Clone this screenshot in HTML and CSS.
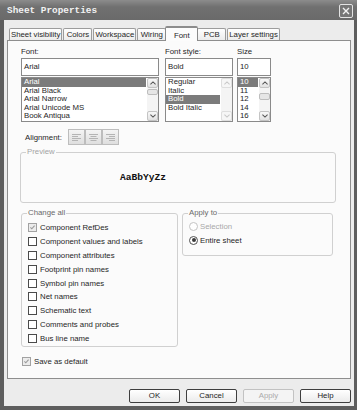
FILE: index.html
```html
<!DOCTYPE html>
<html lang="en">
<head>
  <meta charset="UTF-8">
  <title>Sheet Properties</title>
  <link rel="stylesheet" href="styles.css">
</head>
<body>
  <div class="window">
    <div class="titlebar">
      <span class="title">Sheet Properties</span>
      <span class="close">
        <svg width="8" height="8" viewBox="0 0 8 8"><path d="M1 1 L7 7 M7 1 L1 7" stroke="#f2f2f2" stroke-width="1.4"/></svg>
      </span>
    </div>

    <div class="client">
      <div class="tabs">
        <div class="tab">Sheet visibility</div>
        <div class="tab">Colors</div>
        <div class="tab">Workspace</div>
        <div class="tab">Wiring</div>
        <div class="tab active">Font</div>
        <div class="tab">PCB</div>
        <div class="tab">Layer settings</div>
      </div>

      <div class="panel">
        <div class="font-row">
          <div class="field field-font">
            <div class="label">Font:</div>
            <div class="input">Arial</div>
            <div class="listbox">
              <ul class="items">
                <li class="sel">Arial</li>
                <li>Arial Black</li>
                <li>Arial Narrow</li>
                <li>Arial Unicode MS</li>
                <li>Book Antiqua</li>
              </ul>
              <div class="scroll">
                <span class="sb-btn"><svg viewBox="0 0 7 4"><path d="M0.5 3.5 L3.5 0.8 L6.5 3.5"/></svg></span>
                <span class="sb-track"><span class="sb-thumb"></span></span>
                <span class="sb-btn"><svg viewBox="0 0 7 4"><path d="M0.5 0.5 L3.5 3.2 L6.5 0.5"/></svg></span>
              </div>
            </div>
          </div>

          <div class="field field-style">
            <div class="label">Font style:</div>
            <div class="input">Bold</div>
            <div class="listbox">
              <ul class="items">
                <li>Regular</li>
                <li>Italic</li>
                <li class="sel">Bold</li>
                <li>Bold Italic</li>
              </ul>
              <div class="scroll disabled">
                <span class="sb-btn"><svg viewBox="0 0 7 4"><path d="M0.5 3.5 L3.5 0.8 L6.5 3.5"/></svg></span>
                <span class="sb-track"></span>
                <span class="sb-btn"><svg viewBox="0 0 7 4"><path d="M0.5 0.5 L3.5 3.2 L6.5 0.5"/></svg></span>
              </div>
            </div>
          </div>

          <div class="field field-size">
            <div class="label">Size</div>
            <div class="input">10</div>
            <div class="listbox">
              <ul class="items">
                <li class="sel">10</li>
                <li>11</li>
                <li>12</li>
                <li>14</li>
                <li>16</li>
              </ul>
              <div class="scroll">
                <span class="sb-btn"><svg viewBox="0 0 7 4"><path d="M0.5 3.5 L3.5 0.8 L6.5 3.5"/></svg></span>
                <span class="sb-track"><span class="sb-thumb mid"></span></span>
                <span class="sb-btn"><svg viewBox="0 0 7 4"><path d="M0.5 0.5 L3.5 3.2 L6.5 0.5"/></svg></span>
              </div>
            </div>
          </div>
        </div>

        <div class="align-row">
          <span class="align-label">Alignment:</span>
          <span class="align-btn">
            <svg width="9" height="9" viewBox="0 0 9 9"><path d="M0 1.5 H9 M0 3.5 H6 M0 5.5 H9 M0 7.5 H6"/></svg>
          </span>
          <span class="align-btn">
            <svg width="9" height="9" viewBox="0 0 9 9"><path d="M0 1.5 H9 M1.5 3.5 H7.5 M0 5.5 H9 M1.5 7.5 H7.5"/></svg>
          </span>
          <span class="align-btn">
            <svg width="9" height="9" viewBox="0 0 9 9"><path d="M0 1.5 H9 M3 3.5 H9 M0 5.5 H9 M3 7.5 H9"/></svg>
          </span>
        </div>

        <fieldset class="group preview">
          <legend>Preview</legend>
          <div class="sample">AaBbYyZz</div>
        </fieldset>

        <div class="groups">
          <fieldset class="group change-all">
            <legend>Change all</legend>
            <div class="check"><span class="box checked dim"><svg viewBox="0 0 9 9"><path d="M1.8 4.3 L3.6 6.2 L7.2 2.2"/></svg></span>Component RefDes</div>
            <div class="check"><span class="box"></span>Component values and labels</div>
            <div class="check"><span class="box"></span>Component attributes</div>
            <div class="check"><span class="box"></span>Footprint pin names</div>
            <div class="check"><span class="box"></span>Symbol pin names</div>
            <div class="check"><span class="box"></span>Net names</div>
            <div class="check"><span class="box"></span>Schematic text</div>
            <div class="check"><span class="box"></span>Comments and probes</div>
            <div class="check"><span class="box"></span>Bus line name</div>
          </fieldset>

          <fieldset class="group apply-to">
            <legend>Apply to</legend>
            <div class="radio disabled"><span class="dot"></span>Selection</div>
            <div class="radio"><span class="dot on"></span>Entire sheet</div>
          </fieldset>
        </div>

        <div class="check save"><span class="box checked dim"><svg viewBox="0 0 9 9"><path d="M1.8 4.3 L3.6 6.2 L7.2 2.2"/></svg></span>Save as default</div>
      </div>

      <div class="buttons">
        <button class="btn">OK</button>
        <button class="btn">Cancel</button>
        <button class="btn disabled">Apply</button>
        <button class="btn">Help</button>
      </div>
    </div>
  </div>
</body>
</html>
```

FILE: styles.css
```css
* {
  box-sizing: border-box;
}

body {
  margin: 0;
  font-family: "Liberation Sans", Arial, sans-serif;
  font-size: 7.8px;
  color: #262626;
  background: #ffffff;
}

.window {
  width: 357px;
  height: 410px;
  display: flex;
  flex-direction: column;
  background: #5e5e5e;
}

/* title bar */

.titlebar {
  height: 20px;
  flex: none;
  display: flex;
  align-items: center;
  justify-content: space-between;
  padding: 1px 4px 0 7px;
  background: linear-gradient(#8c8c8c, #707070 35%, #6a6a6a);
}

.title {
  font-family: "Liberation Mono", monospace;
  font-weight: bold;
  font-size: 9.4px;
  color: #f2f2f2;
}

.close {
  width: 14px;
  height: 14px;
  border: 1px solid #e4e4e4;
  border-radius: 2px;
  background: #767676;
  display: flex;
  align-items: center;
  justify-content: center;
}

/* client area */

.client {
  flex: 1;
  margin: 0 3px 4px 4px;
  padding: 6px 3px 0 3px;
  background: #ececec;
  display: flex;
  flex-direction: column;
}

.tabs {
  display: flex;
  align-items: flex-end;
  gap: 1px;
  height: 15px;
  margin-bottom: -1px;
  padding-left: 2px;
}

.tab {
  height: 12px;
  min-width: 29px;
  margin-bottom: 1px;
  padding: 0 1px;
  border: 1px solid #9c9c9c;
  border-bottom: none;
  border-radius: 2px 2px 0 0;
  background: linear-gradient(#ffffff, #ececec);
  text-align: center;
  line-height: 11px;
  white-space: nowrap;
}

.tab.active {
  position: relative;
  z-index: 1;
  height: 15px;
  min-width: 33px;
  margin: 0 -2px;
  padding-top: 2px;
  background: #fcfcfc;
  border-color: #8a8a8a;
  border-top: 2px solid #8c8c8c;
}

.panel {
  height: 339px;
  border: 1px solid #8e8e8e;
  background: #fbfbfb;
}

/* font, style, size */

.font-row {
  display: flex;
  margin: 6px 0 0 13px;
}

.field-font {
  width: 138px;
}

.field-style {
  width: 68px;
  margin-left: 6px;
}

.field-size {
  width: 34px;
  margin-left: 4px;
}

.label {
  height: 10px;
  line-height: 10px;
  margin-bottom: 1px;
}

.input {
  height: 18px;
  padding-left: 2px;
  border: 1px solid #8a8a8a;
  background: #ffffff;
  line-height: 16px;
}

.listbox {
  display: flex;
  height: 45px;
  margin-top: 1px;
  border: 1px solid #8a8a8a;
  background: #ffffff;
}

.items {
  flex: 1;
  margin: 0;
  padding: 0 1px 0 0;
  list-style: none;
  overflow: hidden;
}

.items li {
  height: 8.6px;
  line-height: 8.6px;
  padding-left: 2px;
  white-space: nowrap;
}

.items li.sel {
  background: #7b7b7b;
  color: #ffffff;
}

.scroll {
  width: 11px;
  display: flex;
  flex-direction: column;
  background: #f4f4f4;
}

.sb-btn {
  height: 10px;
  flex: none;
  display: flex;
  align-items: center;
  justify-content: center;
  border: 1px solid #c4c4c4;
  border-radius: 2px;
  background: linear-gradient(#f8f8f8, #e2e2e2);
}

.sb-btn svg {
  width: 6px;
  height: 4px;
  fill: none;
  stroke: #555555;
  stroke-width: 1.2;
}

.scroll.disabled .sb-btn {
  background: #f6f6f6;
  border-color: #dedede;
}

.scroll.disabled .sb-btn svg {
  stroke: #c8c8c8;
}

.sb-track {
  flex: 1;
  display: flex;
  flex-direction: column;
}

.sb-thumb {
  height: 6px;
  margin-top: 1px;
  border: 1px solid #bdbdbd;
  border-radius: 2px;
  background: #e6e6e6;
}

.sb-thumb.mid {
  margin-top: 5px;
  height: 7px;
}

/* alignment */

.align-row {
  display: flex;
  align-items: center;
  margin-top: 7px;
  padding-left: 17px;
  height: 16px;
}

.align-label {
  width: 43px;
}

.align-btn {
  width: 17px;
  height: 16px;
  display: flex;
  align-items: center;
  justify-content: center;
  border: 1px solid #bdbdbd;
  background: linear-gradient(#f4f4f4, #dedede);
}

.align-btn svg {
  fill: none;
  stroke: #b4b4b4;
  stroke-width: 1;
}

/* group boxes */

.group {
  margin: 0;
  padding: 0 0 0 5px;
  border: 1px solid #d0d0d0;
  border-radius: 3px;
  min-width: 0;
}

.group legend {
  padding: 0 1px;
  line-height: 10px;
  color: #6a6a6a;
}

.preview {
  width: 316px;
  height: 56px;
  margin: 2px 0 0 12px;
}

.preview legend {
  color: #a4a4a4;
}

.sample {
  margin-top: 15px;
  padding-left: 94px;
  font-family: "Liberation Mono", monospace;
  font-weight: bold;
  font-size: 9.6px;
  line-height: 12px;
  color: #111111;
}

.groups {
  display: flex;
  gap: 4px;
  margin: 5px 0 0 13px;
}

.change-all {
  width: 157px;
  height: 139px;
  padding-top: 3px;
}

.apply-to {
  width: 151px;
  height: 48px;
  padding-top: 1px;
}

.check,
.radio {
  display: flex;
  align-items: center;
  height: 13.8px;
  white-space: nowrap;
}

.check {
  margin-left: 1px;
}

.box {
  width: 9px;
  height: 9px;
  margin-right: 3px;
  flex: none;
  border: 1px solid #4a4a4a;
  background: #ffffff;
}

.box svg {
  display: block;
  width: 7px;
  height: 7px;
  fill: none;
  stroke: #9a9a9a;
  stroke-width: 1.4;
}

.box.dim {
  border-color: #a2a2a2;
  background: #ececec;
}

.radio {
  margin-left: 1px;
  height: 14px;
}

.dot {
  width: 9px;
  height: 9px;
  margin-right: 2px;
  flex: none;
  border: 1px solid #505050;
  border-radius: 50%;
  background: #ffffff;
  display: flex;
  align-items: center;
  justify-content: center;
}

.dot.on::after {
  content: "";
  width: 4px;
  height: 4px;
  border-radius: 50%;
  background: #3a3a3a;
}

.radio.disabled {
  color: #a8a8a8;
}

.radio.disabled .dot {
  border-color: #c4c4c4;
}

.save {
  margin: 8px 0 0 14px;
}

/* dialog buttons */

.buttons {
  display: flex;
  justify-content: flex-end;
  gap: 6px;
  margin-top: 10px;
}

.btn {
  width: 51px;
  height: 14px;
  padding: 0;
  border: 1px solid #3e3e3e;
  border-radius: 2px;
  background: linear-gradient(#ffffff, #ebebeb);
  font-family: inherit;
  font-size: 7.8px;
  line-height: 12px;
  color: #1c1c1c;
}

.btn.disabled {
  border-color: #c2c2c2;
  background: #f4f4f4;
  color: #ababab;
}
```
